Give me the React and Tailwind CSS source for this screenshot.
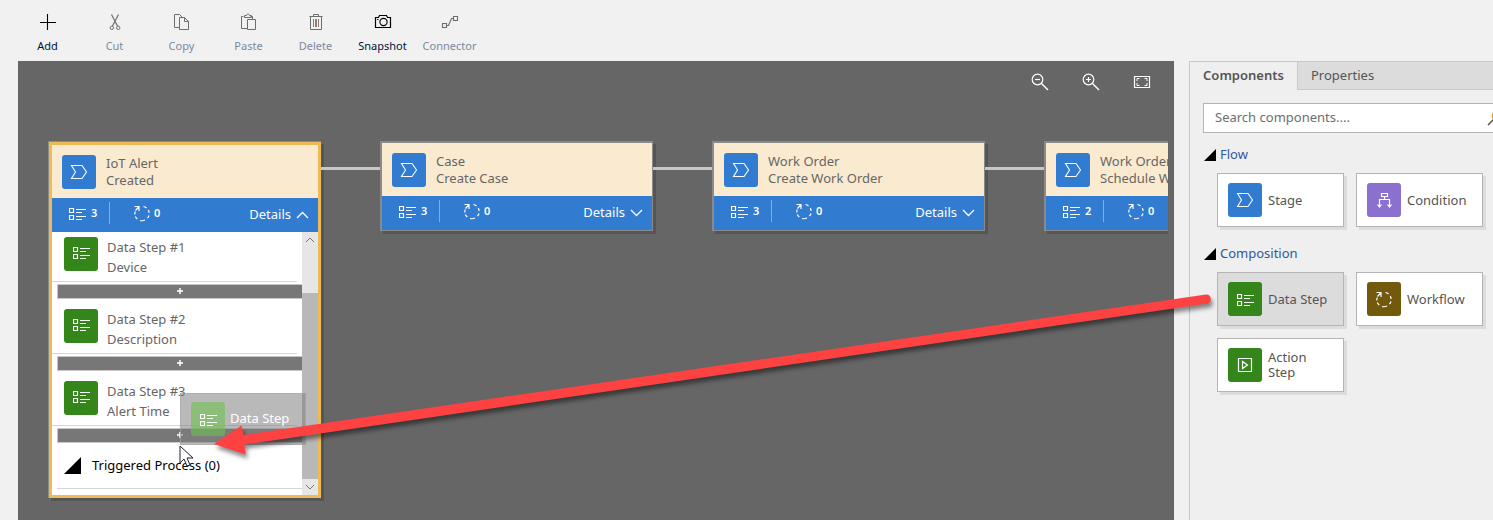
import React from "react";

function Svg({ w, h, children, className = "", sw = 1 }) {
  return (
    <svg width={w} height={h} viewBox={`0 0 ${w} ${h}`} fill="none" stroke="currentColor" strokeWidth={sw} className={`shrink-0 ${className}`} aria-hidden="true">
      {children}
    </svg>
  );
}

const AddIcon = () => (
  <Svg w={18} h={18}><path d="M8.5 1v16M1 9.5h16" strokeWidth="1.1" /></Svg>
);
const CutIcon = () => (
  <Svg w={18} h={18}>
    <path d="M5.5 1.5L11.5 13M12.5 1.5L6.5 13" strokeWidth="1.2" />
    <circle cx="5.8" cy="14.8" r="1.7" /><circle cx="12.2" cy="14.8" r="1.7" />
  </Svg>
);
const CopyIcon = () => (
  <Svg w={18} h={18}>
    <path d="M6.5 14.5h-5v-13h5l3 3M6.5 4.500h5l4 4v8h-9zM11.5 4.5v4h4" />
  </Svg>
);
const PasteIcon = () => (
  <Svg w={18} h={18}>
    <path d="M7.5 15.5h-6v-12h2M10.5 3.5h2v3M4.5 4.5v-2h2c0-2 3-2 3 0h2v2z" />
    <path d="M7.5 6.5h8v10h-8z" />
  </Svg>
);
const DeleteIcon = () => (
  <Svg w={18} h={18}>
    <path d="M2.5 3.5h13M3.5 3.5v13h11v-13M6.5 3.5v-2h5v2" />
    <path d="M6.5 6v8M8.5 6v8M9.5 6v8M11.5 6v8" stroke="#8f7f78" />
  </Svg>
);
const SnapshotIcon = () => (
  <Svg w={18} h={18}>
    <path d="M1.5 4.5h3l1-2h7l1 2h3v10h-15z" strokeWidth="1.2" />
    <circle cx="9.5" cy="9" r="3.6" strokeWidth="1.1" /><path d="M3 6.5h1.500" />
  </Svg>
);
const ConnectorIcon = () => (
  <Svg w={18} h={18}>
    <path d="M1.5 10.5h4v4h-4zM12.5 3.5h4v4h-4zM5.5 12.5h2l3-7h2" strokeWidth="1.1" />
  </Svg>
);
const ListIcon = () => (
  <Svg w={17} h={13}>
    <path d="M.5 1.5h4v4h-4zM.5 8.5h4v4h-4z" strokeWidth="1.2" />
    <path d="M7 2.500h10M7 5.500h6M7 9.500h10M7 12.500h6" />
  </Svg>
);
const StageIcon = () => (
  <Svg w={18} h={16}>
    <path d="M1.5 1.500h10.500l4.500 6.500-4.500 6.500H1.500l4-6.500z" strokeWidth="1.1" />
  </Svg>
);
const FlowIcon = () => (
  <Svg w={18} h={17}>
    <path d="M1.5 1.500H6v4.500M6 1.5L2.5 5.500" strokeWidth="1.200" />
    <path d="M10.5 1.5a7 7 0 0 1 3 1.500M15.300 5a7 7 0 0 1 .8 3M16 10.500a7 7 0 0 1-1.500 2.700M12 15a7 7 0 0 1-5 .5M4.300 14a7 7 0 0 1-2-2.500M1.800 9.500a7 7 0 0 1 .5-3" strokeWidth="1.200" />
  </Svg>
);
const ConditionIcon = () => (
  <Svg w={17} h={17}>
    <path d="M5.5 1.5h6v3h-6zM8.500 4.500v3M3.500 15v-7.500h10V15M1.500 12.500l2 2.500 2-2.500M11.500 12.500l2 2.500 2-2.500" strokeWidth="1.2" />
  </Svg>
);
const ActionIcon = () => (
  <Svg w={16} h={16}>
    <path d="M1.5 1.5h13v13h-13zM5.5 4.5v7l5-3.500z" strokeWidth="1.2" />
  </Svg>
);
const Chevron = ({ up }) => (
  <Svg w={13} h={8}><path d={up ? "M1 7l5.5-5.5L12 7" : "M1 1l5.5 5.5L12 1"} strokeWidth="1.3" /></Svg>
);
const Triangle = ({ size }) => (
  <svg width={size} height={size} viewBox="0 0 12 12" className="shrink-0" aria-hidden="true"><path d="M12 0v12H0z" fill="#000" /></svg>
);
const Magnifier = ({ plus }) => (
  <Svg w={18} h={18}>
    <circle cx="6.5" cy="6.5" r="5.3" strokeWidth="1.2" />
    <path d="M10.5 10.5l6.5 6.5" strokeWidth="1.4" />
    <path d={plus ? "M4 6.5h5M6.500 4v5" : "M4 6.5h5"} strokeWidth="1.2" />
  </Svg>
);
const FitIcon = () => (
  <Svg w={18} h={18}>
    <path d="M1.5 3.5h15v11h-15z" strokeWidth="1.2" />
    <path d="M4 8v-2.500h2.500M11.500 5.500h2.500v2.500M14 10v2.500h-2.500M6.500 12.500h-2.500v-2.500" />
  </Svg>
);

function Tile({ color, children }) {
  return <span className={`flex size-[34px] shrink-0 items-center justify-center rounded-[3px] text-white ${color}`}>{children}</span>;
}

const tools = [
  ["Add", AddIcon, true],
  ["Cut", CutIcon, false],
  ["Copy", CopyIcon, false],
  ["Paste", PasteIcon, false],
  ["Delete", DeleteIcon, false],
  ["Snapshot", SnapshotIcon, true],
  ["Connector", ConnectorIcon, false],
];

function Toolbar() {
  return (
    <header className="flex h-[61px] pl-[14px]">
      {tools.map(([label, Icon, on]) => (
        <button key={label} type="button" disabled={!on} className={`flex w-[67px] flex-col items-center gap-2 pt-[13px] text-[11px] leading-[14px] ${on ? "text-[#001433]" : "text-[#7d889f]"}`}>
          <span className={on ? "text-black" : "text-[#6e6e6e]"}><Icon /></span>
          {label}
        </button>
      ))}
    </header>
  );
}

function StageHead({ name, action, steps, open }) {
  return (
    <>
      <div className="flex h-[53px] gap-[10px] bg-[#faebd0] pt-[10px] pl-[10px] text-[#666]">
        <Tile color="bg-[#317bd1]"><StageIcon /></Tile>
        <div className="leading-[17px] whitespace-nowrap">
          <div>{name}</div>
          <div>{action}</div>
        </div>
      </div>
      <div className="flex h-[34px] bg-[#317bd1] pr-[9px] pl-[17px] text-white">
        <div className="flex h-[30px] items-center text-[11px] font-semibold">
          <ListIcon />
          <span className="w-[23px] pl-[5px]">{steps}</span>
          <span className="mr-[23px] h-[22px] w-px bg-[#7fb0ea]" />
          <FlowIcon />
          <span className="pl-[3px]">0</span>
        </div>
        <button type="button" aria-expanded={open} className="ml-auto flex items-center gap-[5px]">
          Details <Chevron up={open} />
        </button>
      </div>
    </>
  );
}

function StageCard(props) {
  return (
    <article className="w-[273px] shrink-0 self-start border-t-2 border-r border-b border-l-2 border-[#8a8a8a] shadow-[3px_3px_0_#555]">
      <StageHead {...props} />
    </article>
  );
}

const Link = () => <span className="mt-[26px] h-[3px] w-[59px] shrink-0 bg-[#c8c8c8]" />;

const dataSteps = [
  ["Data Step #1", "Device"],
  ["Data Step #2", "Description"],
  ["Data Step #3", "Alert Time"],
];

function OpenStage() {
  return (
    <article className="w-[273px] shrink-0 border-t border-l border-[#8a8a8a] shadow-[3px_3px_0_#555]">
      <div className="border-[3px] border-[#ecba56]">
        <StageHead name="IoT Alert" action="Created" steps={3} open />
        <div className="flex bg-white">
          <div className="min-w-0 flex-1 pb-[6px]">
            <ul className="flex flex-col gap-[10px] pt-[5px]">
              {dataSteps.map(([title, field]) => (
                <li key={title}>
                  <div className="mr-[5px] flex h-[45px] gap-[9px] border-b border-[#d4d4d4] pl-3 text-[#666]">
                    <Tile color="bg-[#35861a] pb-1"><ListIcon /></Tile>
                    <div className="leading-5">
                      <div>{title}</div>
                      <div>{field}</div>
                    </div>
                  </div>
                  <button type="button" aria-label="Insert step" className="mt-[2px] ml-[5px] flex h-[15px] w-[245px] items-center justify-center border border-r-0 border-[#c8c8c8] bg-[#777] pb-[2px] text-white">
                    <Svg w={6} h={6}><path d="M3 0v6M0 3h6" strokeWidth="1.5" /></Svg>
                  </button>
                </li>
              ))}
            </ul>
            <button type="button" aria-expanded="false" className="ml-[5px] flex h-[46px] w-[245px] items-center gap-[11px] border-b border-[#d4d4d4] pl-[7px] text-black">
              <Triangle size={17} /> Triggered Process (0)
            </button>
          </div>
          <div className="flex w-4 flex-col items-center bg-[#e6e6e6] text-[#777]" aria-hidden="true">
            <span className="flex h-4 items-center"><Svg w={10} h={6}><path d="M1 5l4-4 4 4" /></Svg></span>
            <span className="mt-[45px] w-4 flex-1 bg-[#b8b8b8]" />
            <span className="flex h-4 items-center"><Svg w={10} h={6}><path d="M1 1l4 4 4-4" /></Svg></span>
          </div>
        </div>
      </div>
    </article>
  );
}

function Canvas() {
  return (
    <main className="ml-[18px] min-w-0 flex-1 bg-[#666] pr-[6px]">
      <div className="flex h-20 justify-end gap-[33px] pt-3 pr-[17px] text-white">
        <button type="button" aria-label="Zoom out" className="h-[18px]"><Magnifier /></button>
        <button type="button" aria-label="Zoom in" className="h-[18px]"><Magnifier plus /></button>
        <button type="button" aria-label="Fit to canvas" className="h-[18px]"><FitIcon /></button>
      </div>
      <div className="flex items-start overflow-hidden pb-4 pl-[30px]">
        <OpenStage />
        <Link />
        <StageCard name="Case" action="Create Case" steps={3} open={false} />
        <Link />
        <StageCard name="Work Order" action="Create Work Order" steps={3} open={false} />
        <Link />
        <StageCard name="Work Order" action="Schedule Work Order" steps={2} open={false} />
      </div>
    </main>
  );
}

function Component({ label, color, active, children }) {
  return (
    <button type="button" className={`flex h-[54px] w-[127px] items-center gap-[6px] border border-[#b4b4b4] pr-3 pl-[10px] text-left leading-[15px] text-[#555] shadow-[3px_3px_0_#dcdcdc] ${active ? "bg-[#dcdcdc]" : "bg-white"}`}>
      <Tile color={color}>{children}</Tile>
      <span>{label}</span>
    </button>
  );
}

function Section({ title, children }) {
  return (
    <section className="mb-[18px]">
      <h2 className="mb-[9px] flex h-[18px] items-center gap-1 text-[#2f57a0]">
        <Triangle size={12} /> {title}
      </h2>
      <div className="flex w-[280px] flex-wrap gap-3 pl-[13px]">{children}</div>
    </section>
  );
}

function Sidebar() {
  return (
    <aside className="ml-[15px] w-[304px] shrink-0 overflow-hidden border-t border-l border-[#c8c8c8] bg-[#efefef]">
      <div role="tablist" className="flex h-7 text-[#555]">
        <button type="button" role="tab" aria-selected="true" className="w-[107px] shrink-0 font-semibold">Components</button>
        <button type="button" role="tab" aria-selected="false" className="flex-1 border-b border-l border-[#c8c8c8] bg-[#dcdcdc] pl-[13px] text-left">Properties</button>
      </div>
      <div className="pt-[13px] pl-[13px]">
        <div className="flex h-[30px] w-[306px] items-center border border-[#b4b4b4] bg-white">
          <input type="search" aria-label="Search components" placeholder="Search components...." className="w-[283px] pl-[11px] outline-none placeholder:text-[#6e6e6e]" />
          <Svg w={16} h={16}>
            <path d="M1 15l6-6" stroke="#5a4a3a" strokeWidth="1.5" />
            <circle cx="10" cy="6" r="4.5" stroke="#e0961e" strokeWidth="1.5" fill="#8cc4f0" />
          </Svg>
        </div>
        <div className="pt-[13px] pl-px">
          <Section title="Flow">
            <Component label="Stage" color="bg-[#317bd1]"><StageIcon /></Component>
            <Component label="Condition" color="bg-[#8b70cf]"><ConditionIcon /></Component>
          </Section>
          <Section title="Composition">
            <Component label="Data Step" color="bg-[#35861a]" active><ListIcon /></Component>
            <Component label="Workflow" color="bg-[#73590c]"><FlowIcon /></Component>
            <Component label="Action Step" color="bg-[#35861a]"><ActionIcon /></Component>
          </Section>
        </div>
      </div>
    </aside>
  );
}

function DragOverlay() {
  return (
    <div className="pointer-events-none absolute inset-0 overflow-hidden">
      <div className="absolute top-[393px] left-[180px] flex h-[52px] w-[126px] items-center gap-[5px] border border-[#aaa]/60 bg-[#808080]/55 pl-[10px] text-white">
        <span className="flex size-[34px] items-center justify-center rounded-[3px] bg-[#6fc24e]/60"><ListIcon /></span>
        Data Step
      </div>
      <svg width="1230" height="520" viewBox="0 0 1230 520" className="absolute top-0 left-0" aria-hidden="true">
        <path d="M180 446v17l4-4 3 7 3-1-3-7h6z" fill="#fff" stroke="#223" strokeWidth="1" />
        <g className="drop-shadow-[2px_4px_2px_rgba(0,0,0,0.45)]">
          <path d="M214 444L241.5 425.500L243.500 435L1206 294.500A4.600 4.600 0 0 1 1207.500 303.500L244.500 444.500L245.500 454.500Z" fill="#fe4242" />
        </g>
      </svg>
    </div>
  );
}

export default function App() {
  return (
    <div className="relative flex min-h-screen flex-col bg-[#f1f1f1] font-['Noto_Sans','Open_Sans',sans-serif] text-[13px]">
      <Toolbar />
      <div className="flex flex-1">
        <Canvas />
        <Sidebar />
      </div>
      <DragOverlay />
    </div>
  );
}
